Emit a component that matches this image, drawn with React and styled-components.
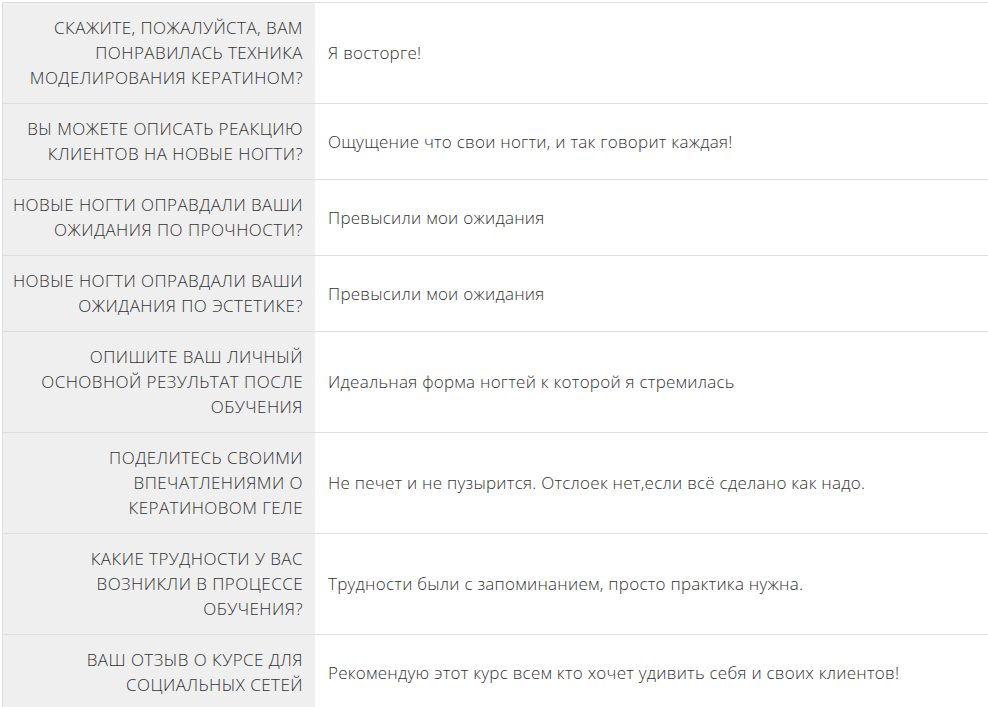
import styled, { createGlobalStyle } from 'styled-components';

const Global = createGlobalStyle`
    body {
        margin: 0;
        background: #fff;
        font-family: "Open Sans", sans-serif;
        color: #333;
    }
`

const Page = styled.div`
    padding: 2px 0 0 2px;
    overflow: hidden;
    height: 707px;
`

const Table = styled.div`
    display: grid;
    grid-template-columns: 312px 1fr;
    border-top: 1px solid #dedede;
    border-left: 1px solid #dedede;
    width: 1000px;
`

const Question = styled.div`
    background: #efefef;
    border-bottom: 1px solid #dedede;
    padding: 12px 12px 13px 6px;
    text-align: right;
    text-transform: uppercase;
    font-size: 17px;
    font-weight: 300;
    line-height: 25px;
    letter-spacing: 0.45px;
    white-space: nowrap;
    display: flex;
    align-items: center;
    justify-content: flex-end;
`

const Answer = styled.div`
    border-bottom: 1px solid #dedede;
    padding: 12px 13px 13px;
    font-size: 17px;
    font-weight: 300;
    line-height: 25px;
    letter-spacing: 0.25px;
    display: flex;
    align-items: center;
`

const rows = [
    [['Скажите, пожалуйста, вам', 'понравилась техника', 'моделирования кератином?'], 'Я восторге!'],
    [['Вы можете описать реакцию', 'клиентов на новые ногти?'], 'Ощущение что свои ногти, и так говорит каждая!'],
    [['Новые ногти оправдали ваши', 'ожидания по прочности?'], 'Превысили мои ожидания'],
    [['Новые ногти оправдали ваши', 'ожидания по эстетике?'], 'Превысили мои ожидания'],
    [['Опишите ваш личный', 'основной результат после', 'обучения'], 'Идеальная форма ногтей к которой я стремилась'],
    [['Поделитесь своими', 'впечатлениями о', 'кератиновом геле'], 'Не печет и не пузырится. Отслоек нет,если всё сделано как надо.'],
    [['Какие трудности у вас', 'возникли в процессе', 'обучения?'], 'Трудности были с запоминанием, просто практика нужна.'],
    [['Ваш отзыв о курсе для', 'социальных сетей'], 'Рекомендую этот курс всем кто хочет удивить себя и своих клиентов!'],
]

const App = () => {
    return (
        <Page>
            <Global />
            <Table>
                {rows.map(([lines, a], i) => (
                    <>
                        <Question key={'q' + i}>
                            <span>
                                {lines.map((l, j) => (
                                    <span key={j}>{l}{j < lines.length - 1 && <br />}</span>
                                ))}
                            </span>
                        </Question>
                        <Answer key={'a' + i}>{a}</Answer>
                    </>
                ))}
            </Table>
        </Page>
    );
};

export default App;
